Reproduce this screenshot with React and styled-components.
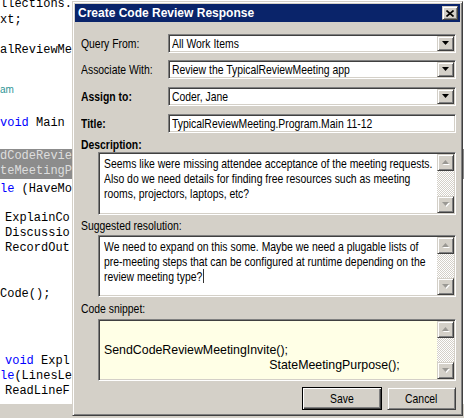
import React from "react";
import styled, { createGlobalStyle } from "styled-components";

const GlobalStyle = createGlobalStyle`
  html, body {
    margin: 0;
    padding: 0;
    background: #fff;
    overflow: hidden;
  }
  #root {
    width: 464px;
    height: 418px;
  }
`;

// no narrow face is installed, so the dialog text is squeezed to match
const UI_FONT = `"Liberation Sans Narrow", "Arial Narrow", "Liberation Sans", Arial, sans-serif`;

const codeLines = [
  { gap: -3, parts: [["llections.", "plain"]] },
  { gap: 1, parts: [["xt;", "plain"]] },
  { gap: 15, parts: [["alReviewMe", "plain"]] },
  { gap: 24, parts: [["am", "note"]] },
  { gap: 19, parts: [["void", "kw"], [" Main", "plain"]] },
  { gap: 18, selected: true, parts: [["dCodeRevie", "plain"]] },
  { gap: 0, selected: true, parts: [["teMeetingP", "plain"]] },
  { gap: 3, parts: [["le", "kw"], [" (HaveMo", "plain"]] },
  { gap: 14, indent: 5, parts: [["ExplainCo", "plain"]] },
  { gap: 0, indent: 5, parts: [["Discussio", "plain"]] },
  { gap: 0, indent: 5, parts: [["RecordOut", "plain"]] },
  { gap: 31, parts: [["Code();", "plain"]] },
  { gap: 52, indent: 5, parts: [["void", "kw"], [" Expl", "plain"]] },
  { gap: 0, parts: [["le", "kw"], ["(LinesLe", "plain"]] },
  { gap: 0, indent: 5, parts: [["ReadLineF", "plain"]] },
];

const Screen = styled.div`
  position: relative;
  width: 464px;
  height: 418px;
  overflow: hidden;
  background: #fff;
`;

const Editor = styled.div`
  display: flex;
  flex-direction: column;
  height: 100%;
`;

const CodeArea = styled.div`
  flex: 1;
  overflow: hidden;
  font-family: "Liberation Mono", "Courier New", monospace;
  font-size: 12px;
`;

const CodeLine = styled.div`
  height: 15px;
  line-height: 15px;
  white-space: pre;
  margin-top: ${(p) => p.$gap}px;
  padding-left: ${(p) => p.$indent || 0}px;
  background: ${(p) => (p.$selected ? "#8c8c8c" : "transparent")};
  color: ${(p) => (p.$selected ? "#dedede" : "#000")};
`;

const Token = styled.span`
  color: ${(p) =>
    p.$kind === "kw" ? "#0000ff" : p.$kind === "note" ? "#2e9595" : "inherit"};
  ${(p) =>
    p.$kind === "note" &&
    `font-family: "Liberation Sans", Arial, sans-serif; font-size: 10px;`}
`;

const HScroll = styled.div`
  height: 14px;
  background: #d4d0c8;
`;

const Window = styled.div`
  position: absolute;
  left: 72px;
  top: 1px;
  width: 391px;
  height: 415px;
  box-sizing: border-box;
  display: flex;
  flex-direction: column;
  padding: 2px;
  background: #d4d0c8;
  border: 1px solid;
  border-color: #d4d0c8 #404040 #404040 #d4d0c8;
  box-shadow: inset 1px 1px #fff, inset -1px -1px #808080;
`;

const TitleBar = styled.div`
  height: 18px;
  display: flex;
  align-items: center;
  justify-content: space-between;
  padding: 0 2px 0 3px;
  background: #0a246a;
`;

const TitleText = styled.span`
  color: #fff;
  font-family: "Liberation Sans", Arial, sans-serif;
  font-weight: bold;
  font-size: 12px;
`;

const raised = `
  background: #d4d0c8;
  border: 1px solid;
  border-color: #d4d0c8 #404040 #404040 #d4d0c8;
  box-shadow: inset 1px 1px #fff, inset -1px -1px #808080;
`;

const sunken = `
  border: 1px solid;
  border-color: #808080 #fff #fff #808080;
  box-shadow: inset 1px 1px #404040, inset -1px -1px #d4d0c8;
`;

const CloseButton = styled.div`
  ${raised}
  box-sizing: border-box;
  width: 16px;
  height: 14px;
  display: flex;
  align-items: center;
  justify-content: center;
`;

const Body = styled.div`
  flex: 1;
  display: flex;
  flex-direction: column;
  padding: 0 4px 0 6px;
  font-family: ${UI_FONT};
  font-size: 13px;
  color: #000;
`;

const Narrow = styled.span`
  display: inline-block;
  white-space: pre;
  transform: scaleX(${(p) => p.$scale || 0.8});
  transform-origin: ${(p) => (p.$center ? "center" : "left")} center;
`;

const Field = styled.div`
  display: grid;
  grid-template-columns: 87px 1fr;
  align-items: center;
  margin-top: ${(p) => p.$mt}px;
`;

const Label = styled.div`
  font-weight: ${(p) => (p.$bold ? "bold" : "normal")};
  line-height: 15px;
  white-space: nowrap;
  margin-top: ${(p) => p.$mt || 0}px;
`;

const Combo = styled.div`
  ${sunken}
  box-sizing: border-box;
  height: 19px;
  padding: 1px;
  display: flex;
  background: #fff;
`;

const ComboText = styled.div`
  flex: 1;
  padding-left: 2px;
  line-height: 15px;
  white-space: nowrap;
  overflow: hidden;
`;

const DropButton = styled.div`
  ${raised}
  box-sizing: border-box;
  width: 17px;
  height: 15px;
  display: flex;
  align-items: center;
  justify-content: center;
`;

const TextBox = styled.div`
  ${sunken}
  box-sizing: border-box;
  height: ${(p) => p.$h}px;
  margin-left: 17px;
  margin-top: ${(p) => p.$mt || 0}px;
  padding: 1px;
  display: flex;
  background: ${(p) => p.$bg || "#fff"};
`;

const TextContent = styled.div`
  flex: 1;
  padding: ${(p) => p.$pad || "2px 4px"};
  line-height: 15px;
  white-space: pre;
  overflow: hidden;
`;

const Scrollbar = styled.div`
  width: 17px;
  display: flex;
  flex-direction: column;
`;

const ScrollArrow = styled.div`
  ${raised}
  box-sizing: border-box;
  height: 17px;
  display: flex;
  align-items: center;
  justify-content: center;
`;

const Track = styled.div`
  flex: 1;
  background-color: #fff;
  background-image: repeating-conic-gradient(#d4d0c8 0 25%, #fff 0 50%);
  background-size: 2px 2px;
`;

const Caret = styled.span`
  display: inline-block;
  width: 1px;
  height: 14px;
  margin-left: 1px;
  vertical-align: -2px;
  background: #000;
`;

const Indent = styled.span`
  display: inline-block;
  width: ${(p) => p.$w}px;
`;

const ButtonRow = styled.div`
  display: flex;
  justify-content: flex-end;
  gap: 5px;
  margin-top: 6px;
`;

const Button = styled.div`
  ${raised}
  box-sizing: border-box;
  width: ${(p) => p.$w}px;
  height: 23px;
  display: flex;
  align-items: center;
  justify-content: center;
  ${(p) =>
    p.$default &&
    `border-color: #000;
     box-shadow: inset 1px 1px #fff, inset -1px -1px #404040, inset -2px -2px #808080;`}
`;

const Arrow = ({ up, disabled }) => (
  <svg width="8" height="5" viewBox="0 0 8 5">
    {disabled && (
      <path d={up ? "M1 5 L4 1 L8 5 Z" : "M1 1 L8 1 L4.5 5 Z"} fill="#fff" />
    )}
    <path
      d={up ? "M0 4 L3.5 0 L7 4 Z" : "M0 0 L7 0 L3.5 4 Z"}
      fill={disabled ? "#9a9893" : "#000"}
    />
  </svg>
);

const Scroller = () => (
  <Scrollbar>
    <ScrollArrow>
      <Arrow up disabled />
    </ScrollArrow>
    <Track />
    <ScrollArrow>
      <Arrow disabled />
    </ScrollArrow>
  </Scrollbar>
);

const ComboBox = ({ value }) => (
  <Combo>
    <ComboText>
      <Narrow>{value}</Narrow>
    </ComboText>
    <DropButton>
      <Arrow />
    </DropButton>
  </Combo>
);

export default function App() {
  return (
    <Screen>
      <GlobalStyle />
      <Editor>
        <CodeArea>
          {codeLines.map((line, i) => (
            <CodeLine
              key={i}
              $gap={line.gap}
              $indent={line.indent}
              $selected={line.selected}
            >
              {line.parts.map(([text, kind], j) => (
                <Token key={j} $kind={kind}>
                  {text}
                </Token>
              ))}
            </CodeLine>
          ))}
        </CodeArea>
        <HScroll />
      </Editor>

      <Window>
        <TitleBar>
          <TitleText>Create Code Review Response</TitleText>
          <CloseButton>
            <svg width="8" height="7" viewBox="0 0 8 7">
              <path
                d="M0.5 0.5 L7.5 6.5 M7.5 0.5 L0.5 6.5"
                stroke="#000"
                strokeWidth="1.6"
              />
            </svg>
          </CloseButton>
        </TitleBar>

        <Body>
          <Field $mt={12}>
            <Label>
              <Narrow>Query From:</Narrow>
            </Label>
            <ComboBox value="All Work Items" />
          </Field>
          <Field $mt={7}>
            <Label>
              <Narrow>Associate With:</Narrow>
            </Label>
            <ComboBox value="Review the TypicalReviewMeeting app" />
          </Field>
          <Field $mt={8}>
            <Label $bold>
              <Narrow>Assign to:</Narrow>
            </Label>
            <ComboBox value="Coder, Jane" />
          </Field>
          <Field $mt={8}>
            <Label $bold>
              <Narrow>Title:</Narrow>
            </Label>
            <Combo>
              <ComboText>
                <Narrow>TypicalReviewMeeting.Program.Main 11-12</Narrow>
              </ComboText>
            </Combo>
          </Field>

          <Label $bold $mt={4}>
            <Narrow>Description:</Narrow>
          </Label>
          <TextBox $h={63}>
            <TextContent>
              <Narrow>
                {"Seems like were missing attendee acceptance of the meeting requests.\nAlso do we need details for finding free resources such as meeting\nrooms, projectors, laptops, etc?"}
              </Narrow>
            </TextContent>
            <Scroller />
          </TextBox>

          <Label $mt={3}>
            <Narrow>Suggested resolution:</Narrow>
          </Label>
          <TextBox $h={62} $mt={2}>
            <TextContent>
              <Narrow>
                {"We need to expand on this some. Maybe we need a plugable lists of\npre-meeting steps that can be configured at runtime depending on the\nreview meeting type?"}
                <Caret />
              </Narrow>
            </TextContent>
            <Scroller />
          </TextBox>

          <Label $mt={4}>
            <Narrow>Code snippet:</Narrow>
          </Label>
          <TextBox $h={62} $mt={3} $bg="#ffffe6">
            <TextContent $pad="21px 4px 0">
              <Narrow $scale={0.95}>
                {"SendCodeReviewMeetingInvite();\n"}
                <Indent $w={174} />
                {"StateMeetingPurpose();"}
              </Narrow>
            </TextContent>
            <Scroller />
          </TextBox>

          <ButtonRow>
            <Button $w={80} $default>
              <Narrow $center>Save</Narrow>
            </Button>
            <Button $w={69}>
              <Narrow $center>Cancel</Narrow>
            </Button>
          </ButtonRow>
        </Body>
      </Window>
    </Screen>
  );
}
